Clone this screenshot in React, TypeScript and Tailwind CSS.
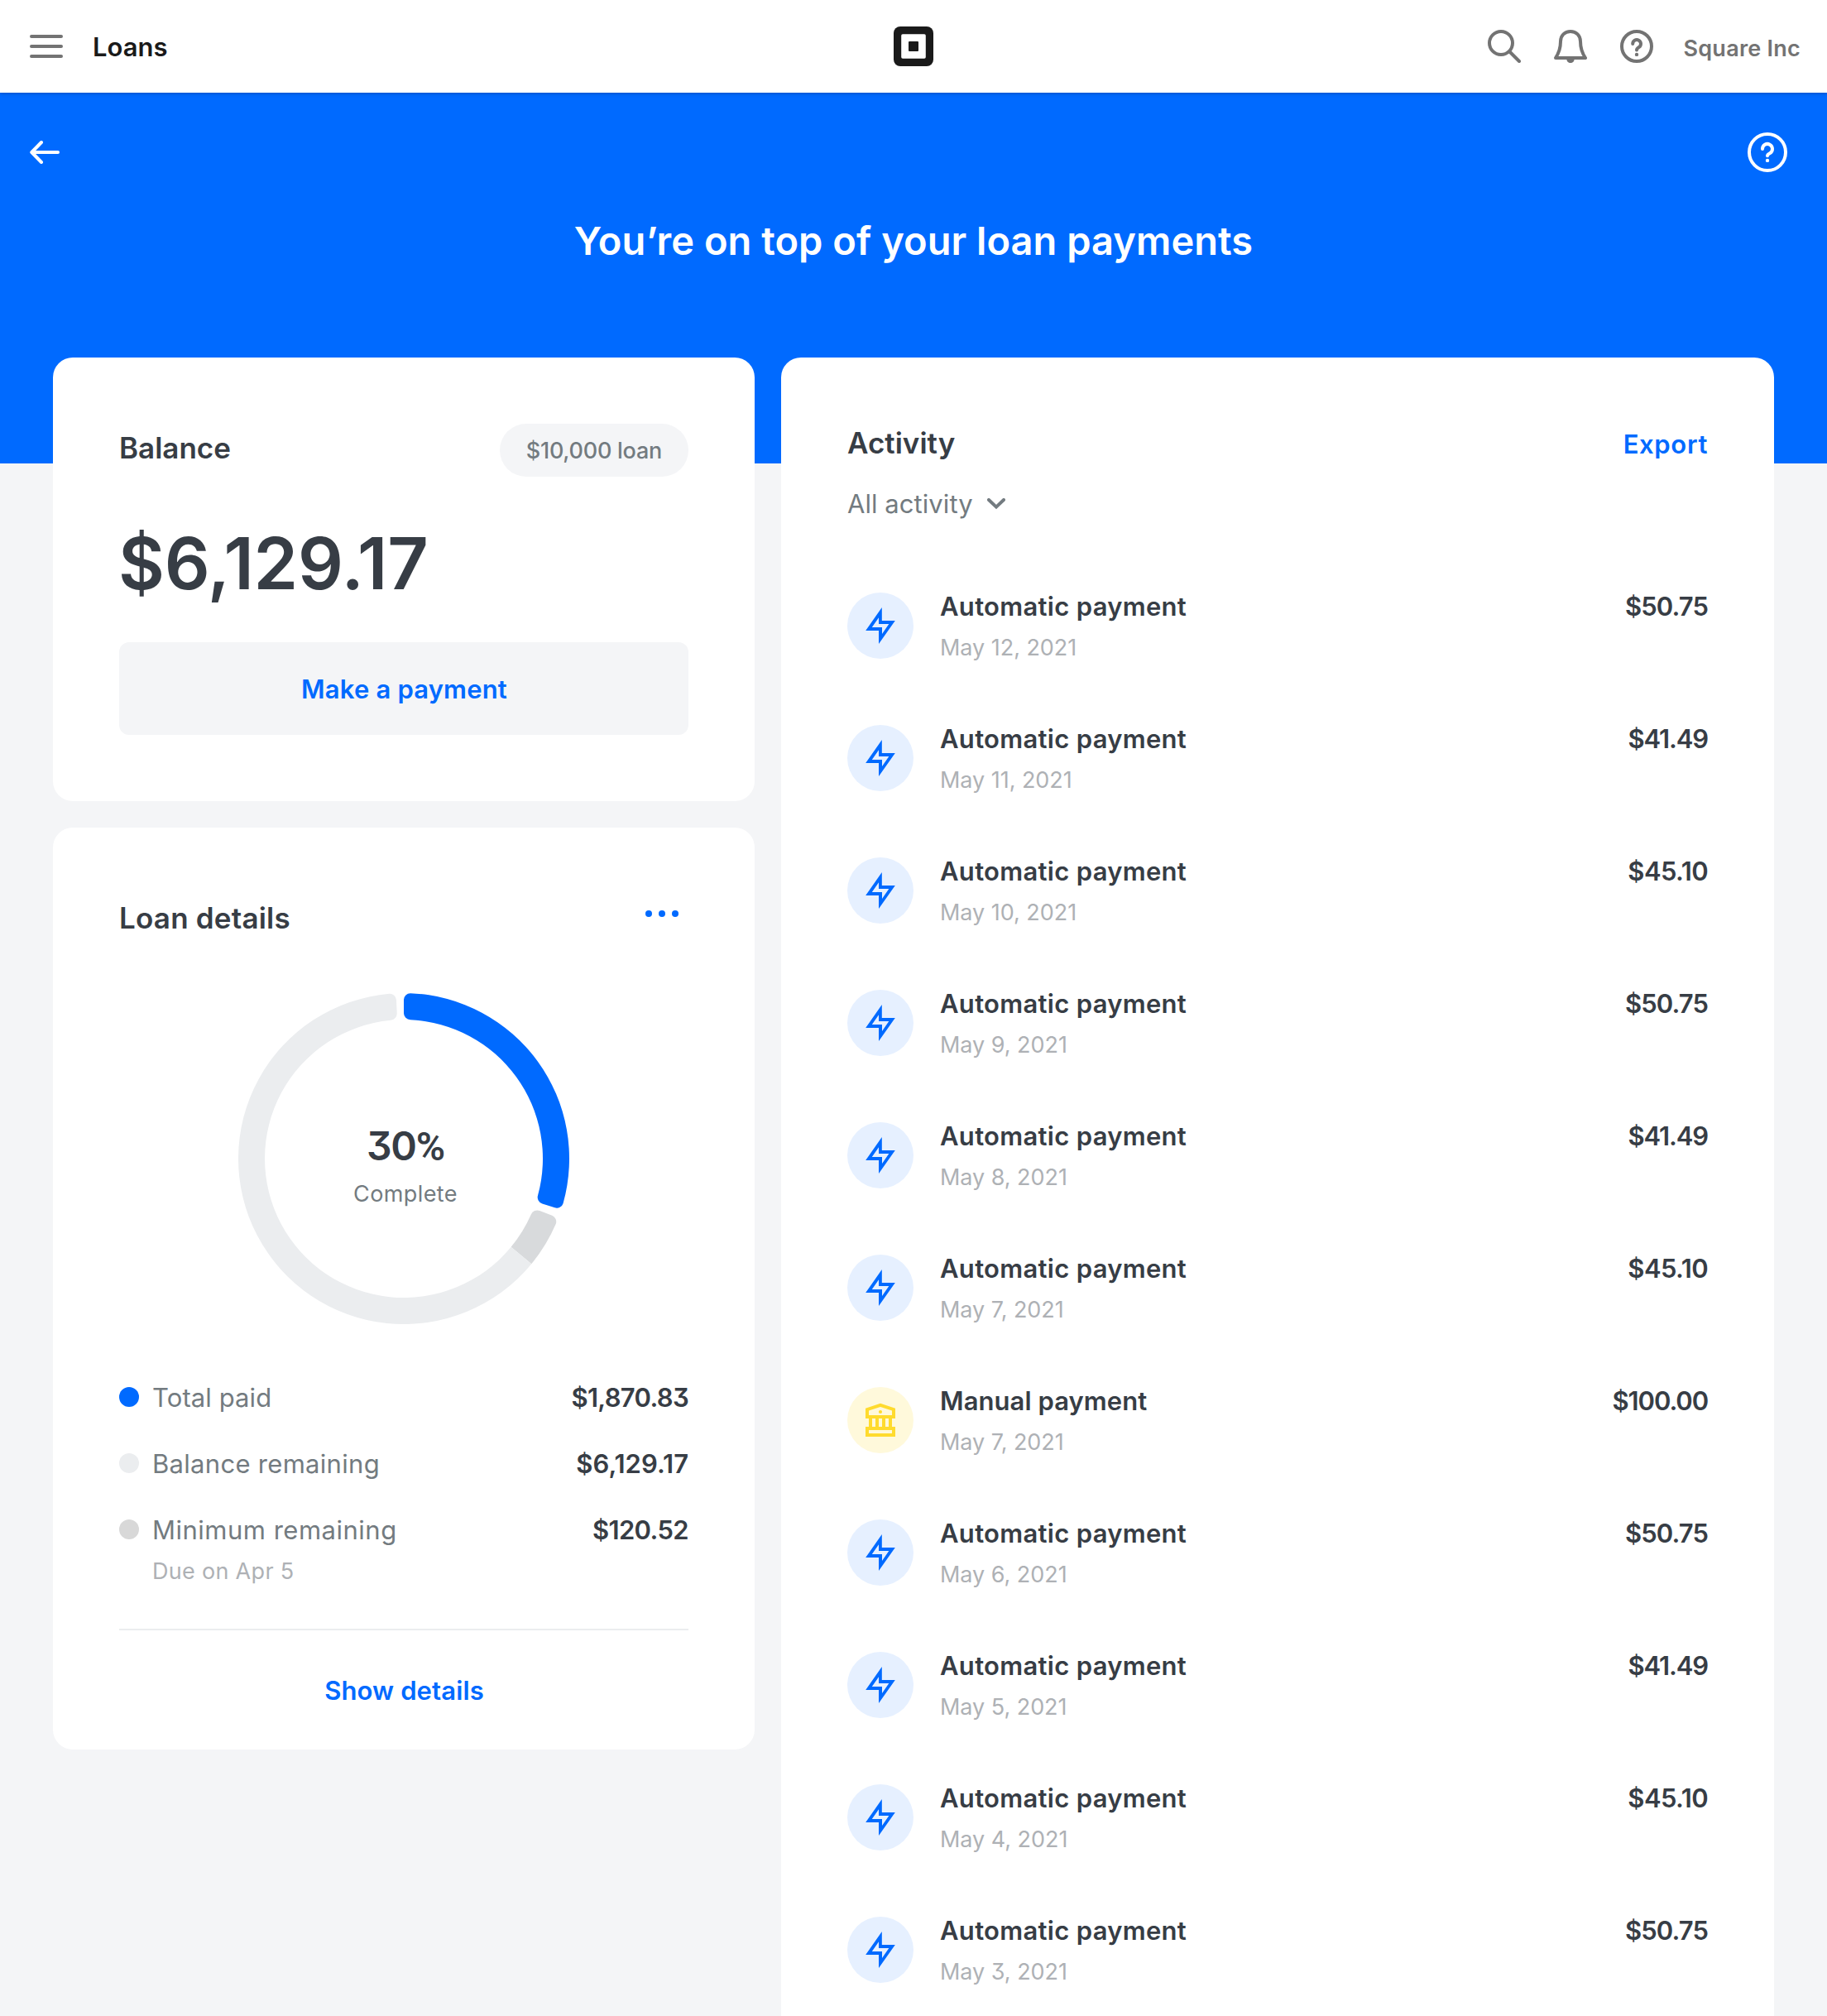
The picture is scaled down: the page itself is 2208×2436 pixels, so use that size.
import type { ReactNode } from "react";

type Kind = "automatic" | "manual";

type Activity = {
  kind: Kind;
  date: string;
  amount: string;
};

const activities: Activity[] = [
  { kind: "automatic", date: "May 12, 2021", amount: "$50.75" },
  { kind: "automatic", date: "May 11, 2021", amount: "$41.49" },
  { kind: "automatic", date: "May 10, 2021", amount: "$45.10" },
  { kind: "automatic", date: "May 9, 2021", amount: "$50.75" },
  { kind: "automatic", date: "May 8, 2021", amount: "$41.49" },
  { kind: "automatic", date: "May 7, 2021", amount: "$45.10" },
  { kind: "manual", date: "May 7, 2021", amount: "$100.00" },
  { kind: "automatic", date: "May 6, 2021", amount: "$50.75" },
  { kind: "automatic", date: "May 5, 2021", amount: "$41.49" },
  { kind: "automatic", date: "May 4, 2021", amount: "$45.10" },
  { kind: "automatic", date: "May 3, 2021", amount: "$50.75" },
];

const amountTracking: Record<string, string> = {
  "$50.75": "tracking-[-0.9px]",
  "$41.49": "tracking-[-1.15px]",
  "$45.10": "tracking-[-0.6px]",
  "$100.00": "tracking-[-1.1px]",
};

function MenuIcon() {
  return (
    <svg
      className="ml-1"
      width="40"
      height="28"
      viewBox="0 0 40 28"
      stroke="#737373"
      strokeWidth="4"
      strokeLinecap="round"
    >
      <path d="M2 2h36M2 14h36M2 26h36" />
    </svg>
  );
}

function LogoIcon() {
  return (
    <svg width="48" height="48" viewBox="0 0 48 48">
      <rect width="48" height="48" rx="8" fill="#1a1a1a" />
      <rect x="9.2" y="9.2" width="29.6" height="29.6" rx="1.8" fill="#fff" />
      <rect x="18" y="18" width="12" height="12" rx="1" fill="#1a1a1a" />
    </svg>
  );
}

function SearchIcon() {
  return (
    <svg width="40" height="40" viewBox="0 0 40 40" fill="none" stroke="#737373" strokeWidth="4" strokeLinecap="round">
      <circle cx="16" cy="16" r="14" />
      <path d="M26.5 26.5 38 38" />
    </svg>
  );
}

function BellIcon() {
  return (
    <svg width="40" height="40" viewBox="0 0 40 40">
      <path
        d="M2 34C6 28 8 21.500 8 14 8 7 13 2 20 2s12 5 12 12c0 7.500 2 14 6 20Z"
        fill="none"
        stroke="#737373"
        strokeWidth="4"
        strokeLinejoin="round"
      />
      <path d="M15.300 35h9.400c0 3-2 5-4.700 5s-4.700-2-4.700-5Z" fill="#737373" />
    </svg>
  );
}

function HelpIcon() {
  return (
    <svg width="40" height="40" viewBox="0 0 40 40" fill="none" stroke="#737373" strokeWidth="4" strokeLinecap="round">
      <circle cx="20" cy="20" r="18" />
      <path d="M15.200 17a4.900 4.900 0 1 1 7.500 4.100c-1.900 1.100-2.700 2-2.700 3.500" />
      <circle cx="20" cy="29.900" r="2.200" fill="#737373" stroke="none" />
    </svg>
  );
}

function HelpLargeIcon() {
  return (
    <svg width="48" height="48" viewBox="0 0 48 48" fill="none" stroke="#fff" strokeWidth="4" strokeLinecap="round">
      <circle cx="24" cy="24" r="22" />
      <path d="M18 20a6 6 0 1 1 9.200 5C24.900 26.200 24 26.900 24 28.200" />
      <circle cx="24" cy="33.900" r="2.200" fill="#fff" stroke="none" />
    </svg>
  );
}

function BackIcon() {
  return (
    <svg
      width="36"
      height="28"
      viewBox="0 0 36 28"
      fill="none"
      stroke="#fff"
      strokeWidth="4"
      strokeLinecap="round"
      strokeLinejoin="round"
    >
      <path d="M14 2 2.300 14 14 26M3 14h31" />
    </svg>
  );
}

function ChevronIcon() {
  return (
    <svg
      className="mt-px"
      width="22"
      height="14"
      viewBox="0 0 22 14"
      fill="none"
      stroke="#737b80"
      strokeWidth="4"
      strokeLinecap="round"
    >
      <path d="M2 2l9 8.600L20 2" />
    </svg>
  );
}

function BoltIcon() {
  return (
    <svg width="80" height="80" viewBox="0 0 80 80">
      <path
        fillRule="evenodd"
        fill="#006aff"
        d="M41.800 18V34H57.800L38 62V46H22.200ZM38 30.300 29.800 42H42V50L50.300 38H38Z"
      />
    </svg>
  );
}

function BankIcon() {
  return (
    <svg width="80" height="80" viewBox="0 0 80 80" fill="#ffdb2e">
      <path
        fillRule="evenodd"
        d="M40 19.800 58 25.800V38H54V48H58V60H22V48H26V38H22V25.800ZM40 24 26 28.600V34H54V28.600ZM30 38V48H34V38ZM38 38V48H42V38ZM46 38V48H50V38ZM26 52V56H54V52Z"
      />
      <circle cx="40" cy="30" r="2.100" />
    </svg>
  );
}

/* Builds a ring segment between two clockwise angles measured from 12 o'clock. */
function segment(from: number, to: number, roundStart: boolean, roundEnd: boolean) {
  const outer = 200;
  const inner = 168;
  const corner = 8;
  const point = (r: number, deg: number) => {
    const a = (deg * Math.PI) / 180;
    return `${(200 + r * Math.sin(a)).toFixed(2)} ${(200 - r * Math.cos(a)).toFixed(2)}`;
  };
  const cs = roundStart ? corner : 0;
  const ce = roundEnd ? corner : 0;
  const turn = (r: number, c: number) => ((c / r) * 180) / Math.PI;
  const large = to - from > 180 ? 1 : 0;
  return [
    `M${point(outer - cs, from)}`,
    `A${cs} ${cs} 0 0 1 ${point(outer, from + turn(outer, cs))}`,
    `A${outer} ${outer} 0 ${large} 1 ${point(outer, to - turn(outer, ce))}`,
    `A${ce} ${ce} 0 0 1 ${point(outer - ce, to)}`,
    `L${point(inner + ce, to)}`,
    `A${ce} ${ce} 0 0 1 ${point(inner, to - turn(inner, ce))}`,
    `A${inner} ${inner} 0 ${large} 0 ${point(inner, from + turn(inner, cs))}`,
    `A${cs} ${cs} 0 0 1 ${point(inner + cs, from)}`,
    "Z",
  ].join("");
}

function ProgressRing() {
  return (
    <div className="mx-auto mt-[62px] grid size-[400px]">
      <svg className="[grid-area:1/1]" width="400" height="400" viewBox="0 0 400 400">
        <path d={segment(0, 108, true, true)} fill="#006aff" />
        <path d={segment(111, 129.5, true, false)} fill="#d8dadc" />
        <path d={segment(129.5, 357.3, false, true)} fill="#ebedef" />
      </svg>
      <div className="flex flex-col items-center pt-[154px] pl-1 [grid-area:1/1]">
        <p className="text-[48px] leading-[61px] font-semibold tracking-[-1.2px]">
          30<span className="font-[Roboto]">%</span>
        </p>
        <p className="mt-[7px] text-[27px] leading-10 tracking-[0.4px] text-[#737b80]">Complete</p>
      </div>
    </div>
  );
}

function LegendRow({ dot, label, children }: { dot: string; label: ReactNode; children: ReactNode }) {
  return (
    <div className="flex h-10 items-center text-[31px] leading-10">
      <span className={`size-6 rounded-full ${dot}`} />
      <span className="ml-4 pt-0.5 tracking-[0.3px] text-[#737b80]">{label}</span>
      <span className="ml-auto pt-0.5 font-semibold">{children}</span>
    </div>
  );
}

function Header() {
  return (
    <header className="relative z-10 flex h-28 items-center bg-white px-8 shadow-[0_1px_4px_rgba(0,0,0,0.25)]">
      <div className="flex flex-1 items-center gap-9">
        <MenuIcon />
        <h1 className="pt-0.5 text-[31px] leading-10 font-semibold text-[#1a1a1a]">Loans</h1>
      </div>
      <LogoIcon />
      <div className="flex flex-1 items-center justify-end gap-10">
        <SearchIcon />
        <BellIcon />
        <HelpIcon />
        <span className="-ml-1 pt-1.5 text-[27px] leading-10 font-semibold tracking-[0.25px] text-[#737373]">
          Square Inc
        </span>
      </div>
    </header>
  );
}

function Hero() {
  return (
    <section className="h-[448px] bg-[#006aff] pt-12 text-white">
      <div className="flex items-center justify-between pr-12 pl-9">
        <BackIcon />
        <HelpLargeIcon />
      </div>
      <h2 className="mt-[52px] text-center text-[47px] leading-[61px] font-semibold tracking-[0.04px]">
        You’re on top of your loan payments
      </h2>
    </section>
  );
}

function BalanceCard() {
  return (
    <section className="rounded-3xl bg-white p-20">
      <div className="flex items-start justify-between">
        <h3 className="text-[35px] leading-[58px] font-semibold">Balance</h3>
        <span className="flex h-16 items-center rounded-full bg-[#f4f5f7] px-8 pt-0.5 text-[27px] font-medium tracking-[-0.25px] text-[#737b80]">
          $10,000 loan
        </span>
      </div>
      <p className="mt-[41px] mb-[30px] -ml-px text-[86px] leading-[129px] font-semibold tracking-[-0.2px]">$6,129.17</p>
      <button className="h-28 w-full rounded-xl bg-[#f4f5f7] pt-[3px] pl-px text-[31px] font-semibold tracking-[0.18px] text-[#006aff]">
        Make a payment
      </button>
    </section>
  );
}

function DetailsCard() {
  return (
    <section className="rounded-3xl bg-white px-20 pt-20 pb-[52px]">
      <div className="flex items-start justify-between">
        <h3 className="text-[35px] leading-[58px] font-semibold tracking-[0.2px]">Loan details</h3>
        <div className="mt-5 mr-3 flex gap-2">
          <span className="size-2 rounded-full bg-[#006aff]" />
          <span className="size-2 rounded-full bg-[#006aff]" />
          <span className="size-2 rounded-full bg-[#006aff]" />
        </div>
      </div>
      <ProgressRing />
      <div className="mt-[68px] flex flex-col gap-10">
        <LegendRow dot="bg-[#006aff]" label={<span className="tracking-[0.1px]">Total paid</span>}>
          <span className="tracking-[-0.7px]">$1,870.83</span>
        </LegendRow>
        <LegendRow dot="bg-[#ebedef]" label="Balance remaining">
          $6,129.17
        </LegendRow>
        <LegendRow dot="bg-[#d8d8d8]" label={<span className="tracking-[0.5px]">Minimum remaining</span>}>
          <span className="tracking-[-0.65px]">$120.52</span>
        </LegendRow>
      </div>
      <p className="mt-[11px] ml-10 text-[27px] leading-10 tracking-[0.3px] text-[#aeb1b5]">Due on Apr 5</p>
      <hr className="mt-[49px] border-t-2 border-[#ebedef]" />
      <button className="mt-[52px] block h-10 w-full pl-px text-[31px] leading-[42px] font-semibold tracking-[0.12px] text-[#006aff]">
        Show details
      </button>
    </section>
  );
}

function ActivityRow({ kind, date, amount }: Activity) {
  const automatic = kind === "automatic";
  return (
    <li className="flex h-40 items-start">
      <span className={`mt-1 size-20 rounded-full ${automatic ? "bg-[#e6f0ff]" : "bg-[#fff9db]"}`}>
        {automatic ? <BoltIcon /> : <BankIcon />}
      </span>
      <div className="ml-8 flex-1">
        <p
          className={`text-[31px] leading-[42px] font-semibold ${automatic ? "tracking-[0.3px]" : "tracking-[0.06px]"}`}
        >
          {automatic ? "Automatic payment" : "Manual payment"}
        </p>
        <p className="mt-2 text-[27px] leading-[42px] tracking-[-0.04px] text-[#aeb1b5]">{date}</p>
      </div>
      <span className={`text-[31px] leading-[42px] font-semibold ${amountTracking[amount]}`}>{amount}</span>
    </li>
  );
}

function ActivityCard() {
  return (
    <section className="w-[1200px] rounded-t-3xl bg-white px-20 pt-20">
      <div className="flex h-12 items-start justify-between">
        <h3 className="text-[35px] leading-[46px] font-semibold">Activity</h3>
        <button className="text-[31px] leading-[49px] font-semibold tracking-[0.65px] text-[#006aff]">Export</button>
      </div>
      <button className="mt-7 flex h-10 items-center gap-[17px] text-[31px] leading-10 text-[#737b80]">
        <span className="pt-0.5 tracking-[0.06px]">All activity</span>
        <ChevronIcon />
      </button>
      <ul className="mt-[84px]">
        {activities.map((item, i) => (
          <ActivityRow key={i} {...item} />
        ))}
      </ul>
    </section>
  );
}

export default function App() {
  return (
    <div className="h-[2436px] w-[2208px] overflow-hidden bg-[#f4f5f7] font-[Inter,sans-serif] text-[#373d45] [font-feature-settings:'cv09']">
      <Header />
      <Hero />
      <main className="relative -mt-32 flex items-start gap-8 px-16">
        <div className="flex w-[848px] flex-col gap-8">
          <BalanceCard />
          <DetailsCard />
        </div>
        <ActivityCard />
      </main>
    </div>
  );
}
